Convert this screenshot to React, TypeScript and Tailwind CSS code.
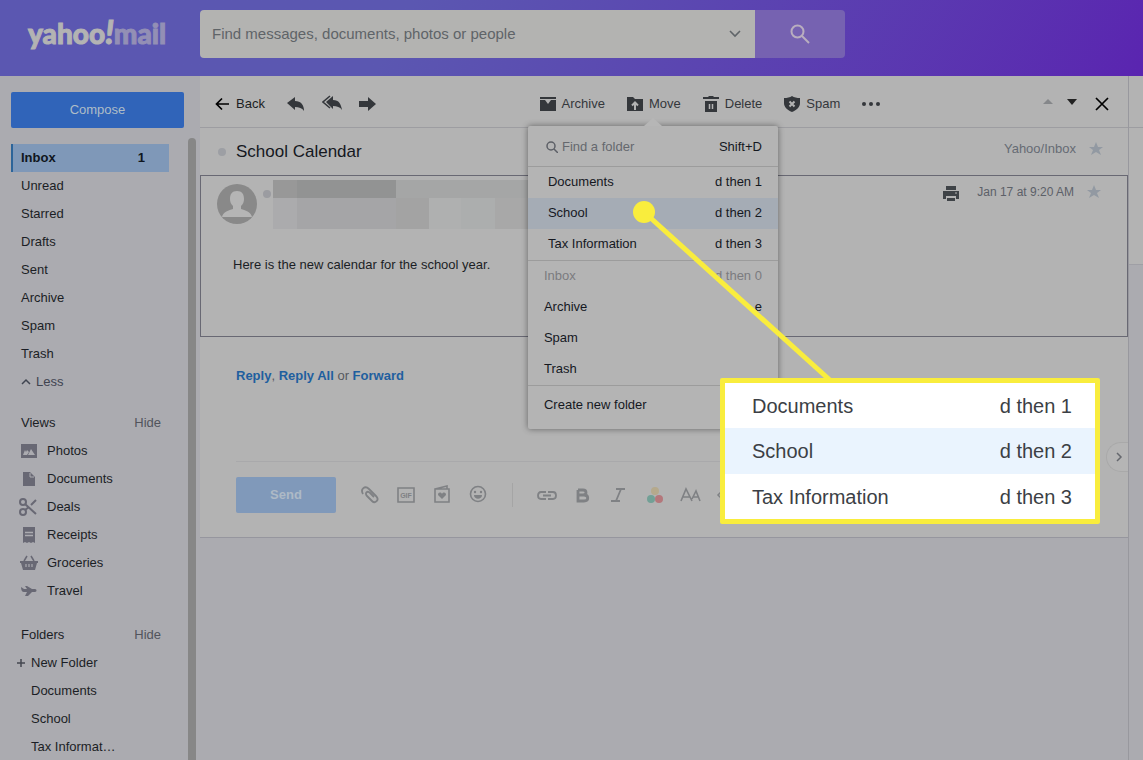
import type { ReactNode } from 'react';
import clsx from 'clsx';

const mailboxes = ['Unread', 'Starred', 'Drafts', 'Sent', 'Archive', 'Spam', 'Trash'];
const folders = ['Documents', 'School', 'Tax Informat…'];

const customFolders = [
  { name: 'Documents', keys: 'd then 1' },
  { name: 'School', keys: 'd then 2' },
  { name: 'Tax Information', keys: 'd then 3' },
];

const systemFolders = [
  { name: 'Inbox', keys: 'd then 0', disabled: true },
  { name: 'Archive', keys: 'e' },
  { name: 'Spam', keys: '' },
  { name: 'Trash', keys: '' },
];

const views: { name: string; icon: ReactNode }[] = [
  {
    name: 'Photos',
    icon: (
      <>
        <path d="M1 2h16v14H1z" fill="currentColor" />
        <path d="M3 13l2-5 1 2 1-2 2 2-2 3zM8 13l3-6 4 6z" fill="#ababb0" />
      </>
    ),
  },
  {
    name: 'Documents',
    icon: (
      <>
        <path d="M3 2h7l5 5v9H3z" fill="currentColor" />
        <path d="M10 3v4h4" fill="none" stroke="#ababb0" />
      </>
    ),
  },
  {
    name: 'Deals',
    icon: (
      <g fill="none" stroke="currentColor" strokeWidth="2">
        <circle cx="3" cy="4" r="3" />
        <circle cx="3" cy="14" r="3" />
        <path d="M5 6l11 10M5 12l4-3M11 7l5-5" />
      </g>
    ),
  },
  {
    name: 'Receipts',
    icon: (
      <>
        <path d="M3 1h12v16l-2-1-2 1-2-1-2 1-2-1-2 1z" fill="currentColor" />
        <path d="M5 6.500h8M5 9.500h8" stroke="#ababb0" strokeWidth="1.500" />
      </>
    ),
  },
  {
    name: 'Groceries',
    icon: (
      <>
        <path d="M0 7h18v2h-1l-2 7H3L1 9H0z" fill="currentColor" />
        <path d="M4 7l3-5M14 7l-3-5" stroke="currentColor" strokeWidth="1.500" />
        <path d="M6 10v3M9 10v3M12 10v3" stroke="#ababb0" strokeWidth="1.200" />
      </>
    ),
  },
  {
    name: 'Travel',
    icon: (
      <path
        d="M1 5l3 2h3L5 4h2l5 3h3c2 0 2 3 0 3h-3l-4 4H5l2-4H4C2 10 1 8 1 5z"
        fill="currentColor"
      />
    ),
  },
];

function Svg({ size = 18, className, children }: { size?: number; className?: string; children: ReactNode }) {
  return (
    <svg
      width={size}
      height={size}
      viewBox={`0 0 ${size} ${size}`}
      className={clsx('shrink-0', className)}
      aria-hidden="true"
    >
      {children}
    </svg>
  );
}

function Star() {
  return (
    <Svg size={16}>
      <path d="M8 1l2 5h5l-4 3 2 5-5-3-5 3 2-5-4-3h5z" fill="#9299a2" />
    </Svg>
  );
}

function Header() {
  return (
    <header className="flex h-[76px] shrink-0 items-start bg-linear-120 from-[#5b57b1] from-35% to-[#5a24b0]">
      <a
        href="#home"
        className="flex w-[200px] shrink-0 items-baseline pt-[14px] pl-7 font-['Lato',sans-serif] text-[28px] leading-9 font-black text-[#b3b3b3] [-webkit-text-stroke:1px_currentColor]"
      >
        yahoo<span className="text-[32px] italic">!</span>
        <span className="text-[#938fb5]">mail</span>
      </a>
      <form className="flex pt-[10px]" onSubmit={(e) => e.preventDefault()}>
        <div className="flex h-12 w-[555px] items-center rounded-l-sm bg-[#b3b3b1] px-3">
          <input
            aria-label="Search mail"
            placeholder="Find messages, documents, photos or people"
            className="min-w-0 flex-1 text-[15px] outline-none placeholder:text-[#5f6468]"
          />
          <button type="button" aria-label="Search options" className="text-[#5f6468]">
            <Svg size={16}>
              <path d="M3 5l5 5 5-5" fill="none" stroke="currentColor" strokeWidth="1.600" />
            </Svg>
          </button>
        </div>
        <button
          type="submit"
          aria-label="Search"
          className="flex h-12 w-[90px] items-center justify-center rounded-r-sm bg-[#7662b1]"
        >
          <Svg size={20}>
            <g fill="none" stroke="#b9aebf" strokeWidth="2">
              <circle cx="7.500" cy="7.500" r="6" />
              <path d="M12 12l7 7" />
            </g>
          </Svg>
        </button>
      </form>
    </header>
  );
}

function SectionTitle({ title }: { title: string }) {
  return (
    <div className="flex h-7 items-center justify-between pr-2 pl-[10px]">
      <h2>{title}</h2>
      <button className="text-[#51545c]">Hide</button>
    </div>
  );
}

function Sidebar() {
  return (
    <aside className="flex w-[200px] shrink-0 flex-col bg-[#ababb0] pt-4">
      <button className="mr-4 ml-[11px] h-9 shrink-0 rounded-xs bg-[#3064b9] text-[#aebdc7]">Compose</button>
      <div className="mt-[10px] flex min-h-0 flex-1">
        <nav className="w-[169px] overflow-hidden pt-[6px] pl-[11px]">
          <a
            href="#inbox"
            className="flex h-7 items-center justify-between border-l-2 border-[#2c6499] bg-[#7f98b8] pr-6 pl-2 font-bold text-[#101620]"
          >
            Inbox <span>1</span>
          </a>
          {mailboxes.map((name) => (
            <a key={name} href="#mailbox" className="flex h-7 items-center pl-[10px]">
              {name}
            </a>
          ))}
          <button className="flex h-7 items-center gap-[5px] pl-[10px] text-[#3f4450]">
            <Svg size={10}>
              <path d="M1 7l4-4 4 4" fill="none" stroke="currentColor" strokeWidth="1.500" />
            </Svg>
            Less
          </button>
          <div className="mt-[13px]">
            <SectionTitle title="Views" />
            {views.map((view) => (
              <a key={view.name} href="#view" className="flex h-7 items-center gap-[9px] pl-[9px]">
                <Svg className="overflow-visible text-[#686874]">{view.icon}</Svg>
                {view.name}
              </a>
            ))}
          </div>
          <div className="mt-4">
            <SectionTitle title="Folders" />
            <button className="flex h-7 items-center gap-[5px] pl-[5px]">
              <Svg size={10}>
                <path d="M1 5h8M5 1v8" stroke="#454850" strokeWidth="1.500" />
              </Svg>
              New Folder
            </button>
            {folders.map((name) => (
              <a key={name} href="#folder" className="flex h-7 items-center pl-5">
                {name}
              </a>
            ))}
          </div>
        </nav>
        <div className="ml-auto w-3 pr-1">
          <div className="h-full w-2 rounded-t-full bg-[#878787]" />
        </div>
      </div>
    </aside>
  );
}

function MenuRow({ name, keys, disabled, indent }: { name: string; keys: string; disabled?: boolean; indent?: boolean }) {
  return (
    <button
      disabled={disabled}
      className={clsx(
        'flex h-[31px] w-full items-center justify-between pr-4',
        indent ? 'pl-5' : 'pl-4',
        name === 'School' && 'bg-[#a5acb5]',
        disabled && 'text-[#7b7b7f]',
      )}
    >
      <span>{name}</span>
      <span>{keys}</span>
    </button>
  );
}

function MoveMenu() {
  return (
    <div className="absolute top-8 -left-[99px] z-10 w-[250px] rounded-xs bg-[#b4b4b4] text-[#15181f] shadow-[0_0_6px_rgba(0,0,0,0.45)]">
      <svg width="18" height="8" viewBox="0 0 18 8" className="absolute -top-2 left-[116px]" aria-hidden="true">
        <path d="M0 8l9-8 9 8z" fill="#b6b6b6" />
      </svg>
      <label className="flex h-[41px] items-center border-b border-[#9c9c9c] pt-[3px] pr-4 pl-[18px]">
        <Svg size={12} className="mr-1">
          <g fill="none" stroke="#5c5f66" strokeWidth="1.500">
            <circle cx="5" cy="5" r="4" />
            <path d="M8 8l4 4" />
          </g>
        </Svg>
        <input
          aria-label="Find a folder"
          placeholder="Find a folder"
          className="w-20 flex-1 outline-none placeholder:text-[#65686e]"
        />
        <span>Shift+D</span>
      </label>
      <div className="border-b border-[#9c9c9c]">
        {customFolders.map((folder) => (
          <MenuRow key={folder.name} {...folder} indent />
        ))}
      </div>
      <div className="border-b border-[#9c9c9c]">
        {systemFolders.map((folder) => (
          <MenuRow key={folder.name} {...folder} />
        ))}
      </div>
      <button className="flex h-[43px] w-full items-center pb-1 pl-4">Create new folder</button>
    </div>
  );
}

function Tool({ label, children }: { label: string; children: ReactNode }) {
  return (
    <button className="flex items-center gap-[6px]">
      <Svg size={16}>{children}</Svg>
      {label}
    </button>
  );
}

function Toolbar() {
  return (
    <div className="flex h-[52px] items-center justify-between border-b border-[#9d9da1] pt-1 pr-[19px] pl-[15px] text-[#34373b]">
      <div className="flex items-center">
        <button className="flex items-center gap-[7px] text-[#1b1e23]">
          <Svg size={14}>
            <path d="M7 1.500L1.500 7 7 12.500M1.500 7H14" fill="none" stroke="#000" strokeWidth="1.700" />
          </Svg>
          Back
        </button>
        <button aria-label="Reply" className="ml-[22px]">
          <Svg>
            <path d="M0 8l8-6v4c6 0 9 4 9 10-2-3-5-4-9-4v3z" fill="currentColor" />
          </Svg>
        </button>
        <button aria-label="Reply all" className="ml-[17px]">
          <Svg size={20}>
            <path d="M4 8l7-6v4c6 0 8 4 9 10-2-3-5-4-9-4v3z" fill="currentColor" />
            <path d="M8 2L1 8l7 6" fill="none" stroke="currentColor" strokeWidth="1.500" />
          </Svg>
        </button>
        <button aria-label="Forward" className="ml-[17px]">
          <Svg>
            <path d="M0 6h9V2l8 7-8 7v-4H0z" fill="currentColor" />
          </Svg>
        </button>
      </div>
      <div className="flex items-center gap-[22px]">
        <Tool label="Archive">
          <path d="M0 1h16v2H0zM0 4h5l3 4 3-4h5v11H0z" fill="currentColor" />
        </Tool>
        <div className="relative">
          <Tool label="Move">
            <path d="M0 1h6l2 2h8v12H0z" fill="currentColor" />
            <path d="M8 14V7M5 9.500L8 6.500l3 3" fill="none" stroke="#b3b3b3" strokeWidth="2" />
          </Tool>
          <MoveMenu />
        </div>
        <Tool label="Delete">
          <path d="M0 1h5l1-1h4l1 1h5v2H0zM2 5h12v11H2z" fill="currentColor" />
          <path d="M6.500 8v5M9.500 8v5" stroke="#b3b3b3" strokeWidth="1.500" />
        </Tool>
        <Tool label="Spam">
          <path d="M8 0c2 1.500 5 2 8 2v5c0 4-3 7-8 9-5-2-8-5-8-9V2c3 0 6-.5 8-2z" fill="currentColor" />
          <path d="M5.500 5.500l5 5M10.500 5.500l-5 5" stroke="#b3b3b3" strokeWidth="2" />
        </Tool>
        <button aria-label="More actions">
          <Svg size={18}>
            <g fill="currentColor">
              <circle cx="2" cy="9" r="2" />
              <circle cx="9" cy="9" r="2" />
              <circle cx="16" cy="9" r="2" />
            </g>
          </Svg>
        </button>
      </div>
      <div className="flex items-center gap-[14px]">
        <button aria-label="Previous message">
          <Svg size={10}>
            <path d="M0 5l5-5 5 5z" fill="#85878a" />
          </Svg>
        </button>
        <button aria-label="Next message">
          <Svg size={10}>
            <path d="M0 0h10L5 6z" fill="#222" />
          </Svg>
        </button>
        <button aria-label="Close" className="ml-1">
          <Svg size={14}>
            <path d="M1 1l12 12M13 1L1 13" stroke="#000" strokeWidth="1.700" />
          </Svg>
        </button>
      </div>
    </div>
  );
}

// sender name and address are redacted
function SenderBlocks() {
  return (
    <div className="mt-1 ml-[2px] w-[260px]">
      <div className="flex h-[18px]">
        <div className="w-6 bg-[#989898]" />
        <div className="w-[99px] bg-[#929393]" />
        <div className="flex-1 bg-[#a5a6a6]" />
      </div>
      <div className="flex h-[31px]">
        <div className="w-6 bg-[#ababad]" />
        <div className="w-[99px] bg-[#a5a5a7]" />
        <div className="w-[33px] bg-[#a3a3a3]" />
        <div className="w-8 bg-[#afb0b0]" />
        <div className="w-[34px] bg-[#acaeae]" />
        <div className="flex-1 bg-[#a8a8a8]" />
      </div>
    </div>
  );
}

function Message() {
  return (
    <article className="h-[162px] border border-[#686873]">
      <div className="flex items-start pr-[25px] pl-4">
        <Svg size={40} className="mt-2">
          <circle cx="20" cy="20" r="20" fill="#898989" />
          <path
            d="M20 7c5 0 7 3 7 8 0 3-1 5-3 7v3c4 1 10 3 11 8H5c1-5 7-7 11-8v-3c-2-2-3-4-3-7 0-5 2-8 7-8z"
            fill="#b5b5b5"
          />
        </Svg>
        <span className="mt-[14px] ml-[6px] size-2 rounded-full bg-[#9b9ca1]" />
        <SenderBlocks />
        <div className="ml-auto flex items-center pt-[6px] text-[#5c6068]">
          <button aria-label="Print" className="pt-1">
            <Svg size={16}>
              <path d="M3 0h10v4H3zM0 5h16v8h-3v-3H3v3H0zM4 12h8v3H4z" fill="#3f4347" />
              <path d="M12 7h2" stroke="#b3b3b3" />
            </Svg>
          </button>
          <time className="mr-3 ml-[18px] text-[12px]">Jan 17 at 9:20 AM</time>
          <button aria-label="Star message">
            <Star />
          </button>
        </div>
      </div>
      <p className="mt-[26px] ml-8">Here is the new calendar for the school year.</p>
    </article>
  );
}

const insertTools: { name: string; icon: ReactNode }[] = [
  {
    name: 'Attach file',
    icon: (
      <path
        d="M3 9C0 4 5 0 9 4l7 7c4 4-1 8-4 5l-5-5c-3-3 1-6 3-3l4 4"
        fill="none"
        stroke="currentColor"
        strokeWidth="1.800"
      />
    ),
  },
  {
    name: 'Insert GIF',
    icon: (
      <>
        <path d="M2 3h16v14H2z" fill="none" stroke="currentColor" strokeWidth="1.600" />
        <text x="10" y="13" textAnchor="middle" fontSize="7" fontWeight="bold" fill="currentColor">
          GIF
        </text>
      </>
    ),
  },
  {
    name: 'Insert card',
    icon: (
      <>
        <path d="M3 4h14v13H3zM3 4l12-3v3" fill="none" stroke="currentColor" strokeWidth="1.600" />
        <path d="M10 14l-4-4c0-3 3-3 4-1 1-2 4-2 4 1z" fill="currentColor" />
      </>
    ),
  },
  {
    name: 'Insert emoji',
    icon: (
      <>
        <circle cx="10" cy="9" r="7.500" fill="none" stroke="currentColor" strokeWidth="1.600" />
        <circle cx="7" cy="7" r="1.200" fill="currentColor" />
        <circle cx="13" cy="7" r="1.200" fill="currentColor" />
        <path d="M6 10h8c0 5-8 5-8 0z" fill="currentColor" />
      </>
    ),
  },
];

const formatTools: { name: string; icon: ReactNode }[] = [
  {
    name: 'Link',
    icon: (
      <path
        d="M9 7H4c-4 0-4 7 0 7h5M11 7h5c4 0 4 7 0 7h-5M6 10.500h8"
        fill="none"
        stroke="currentColor"
        strokeWidth="1.800"
      />
    ),
  },
  {
    name: 'Bold',
    icon: (
      <path
        d="M5 5v11h6c5 0 5-6 0-6H5M5 5h5c4 0 4 5 0 5"
        fill="none"
        stroke="currentColor"
        strokeWidth="2.800"
      />
    ),
  },
  {
    name: 'Italic',
    icon: <path d="M7 4h9M2 16h9M12 4L7 16" fill="none" stroke="currentColor" strokeWidth="1.800" />,
  },
  {
    name: 'Text color',
    icon: (
      <>
        <circle cx="10" cy="6" r="4" fill="#b5a98c" />
        <circle cx="6" cy="14" r="4" fill="#72a096" />
        <circle cx="14" cy="14" r="4" fill="#b4777b" />
      </>
    ),
  },
  {
    name: 'Text size',
    icon: (
      <path
        d="M0 16L5 4l6 12M2 12h7M11 14l4-8 4 10M12 12h6"
        fill="none"
        stroke="currentColor"
        strokeWidth="1.600"
      />
    ),
  },
  {
    name: 'More formatting',
    icon: <path d="M4 7l-3 3 3 3M8 6h10M8 14h10" fill="none" stroke="currentColor" strokeWidth="1.500" />,
  },
];

function ReplyBox() {
  return (
    <section className="px-9 pt-[29px] pb-6">
      <p className="font-bold text-[#1f5f9f]">
        <a href="#reply">Reply</a>
        <span className="font-normal text-[#56595f]">, </span>
        <a href="#reply-all">Reply All</a>
        <span className="font-normal text-[#56595f]"> or </span>
        <a href="#forward">Forward</a>
      </p>
      <div className="mt-[75px] flex items-center border-t border-[#a9a9ab] pt-[15px] text-[#7f8184]">
        <button className="h-9 w-[100px] shrink-0 rounded-xs bg-[#8099ba] font-bold text-[#aebac6]">Send</button>
        <div className="ml-6 flex items-center gap-4">
          {insertTools.map((tool) => (
            <button key={tool.name} aria-label={tool.name}>
              <Svg size={20}>{tool.icon}</Svg>
            </button>
          ))}
        </div>
        <div className="mx-6 h-6 w-px bg-[#a5a5a5]" />
        <div className="flex items-center gap-4">
          {formatTools.map((tool) => (
            <button key={tool.name} aria-label={tool.name}>
              <Svg size={20} className="overflow-visible">
                {tool.icon}
              </Svg>
            </button>
          ))}
        </div>
      </div>
    </section>
  );
}

function ReadingPane() {
  return (
    <main className="relative min-w-0 flex-1">
      <div className="border-b border-[#96969e] bg-[#b3b3b3]">
        <Toolbar />
        <div className="flex h-[47px] items-center pr-6 pl-[18px]">
          <span className="mr-[10px] size-2 rounded-full bg-[#9d9fa4]" />
          <h1 className="text-[17px] text-[#15181e]">School Calendar</h1>
          <div className="ml-auto flex items-center gap-3 pb-[6px] text-[#666b73]">
            Yahoo/Inbox
            <button aria-label="Star conversation">
              <Star />
            </button>
          </div>
        </div>
        <Message />
        <ReplyBox />
      </div>
      <button
        aria-label="Show side panel"
        className="absolute top-[366px] right-0 flex h-[30px] w-[22px] items-center rounded-l-full border border-r-0 border-[#a9a9a9] bg-[#b5b5b5] pl-2"
      >
        <Svg size={10}>
          <path d="M2 1l4 4-4 4" fill="none" stroke="#65686e" strokeWidth="1.500" />
        </Svg>
      </button>
    </main>
  );
}

function Callout() {
  return (
    <div className="absolute top-[200px] left-[632px] z-20">
      <svg width="210" height="190" viewBox="0 0 210 190" aria-hidden="true">
        <path d="M12 12l188 170" stroke="#f9ed3d" strokeWidth="5" />
        <circle cx="12" cy="12" r="11" fill="#f9ed3d" />
      </svg>
      <div className="absolute top-[178px] left-[88px] w-[380px] rounded-xs border-5 border-[#f9ed3d] bg-white text-[20px] text-[#3c3f45]">
        {customFolders.map((folder) => (
          <div
            key={folder.name}
            className={clsx(
              'flex items-center justify-between pr-[23px] pl-[27px]',
              folder.name === 'School' ? 'h-[46px] bg-[#eaf4fe]' : 'h-[45px]',
            )}
          >
            <span>{folder.name}</span>
            <span>{folder.keys}</span>
          </div>
        ))}
      </div>
    </div>
  );
}

export default function App() {
  return (
    <div className="relative flex h-screen flex-col overflow-hidden bg-[#ababb0] font-['Liberation_Sans',Arial,sans-serif] text-[13px] leading-5 text-[#1b1e25]">
      <Header />
      <div className="flex min-h-0 flex-1">
        <Sidebar />
        <ReadingPane />
        <div className="w-[15px] shrink-0 border-l border-[#98989e]">
          <div className="h-[189px] border-b border-[#9f9fa5] bg-[#b3b3b3]">
            <div className="h-[52px] border-b border-[#9d9da1]" />
          </div>
        </div>
      </div>
      <Callout />
    </div>
  );
}
